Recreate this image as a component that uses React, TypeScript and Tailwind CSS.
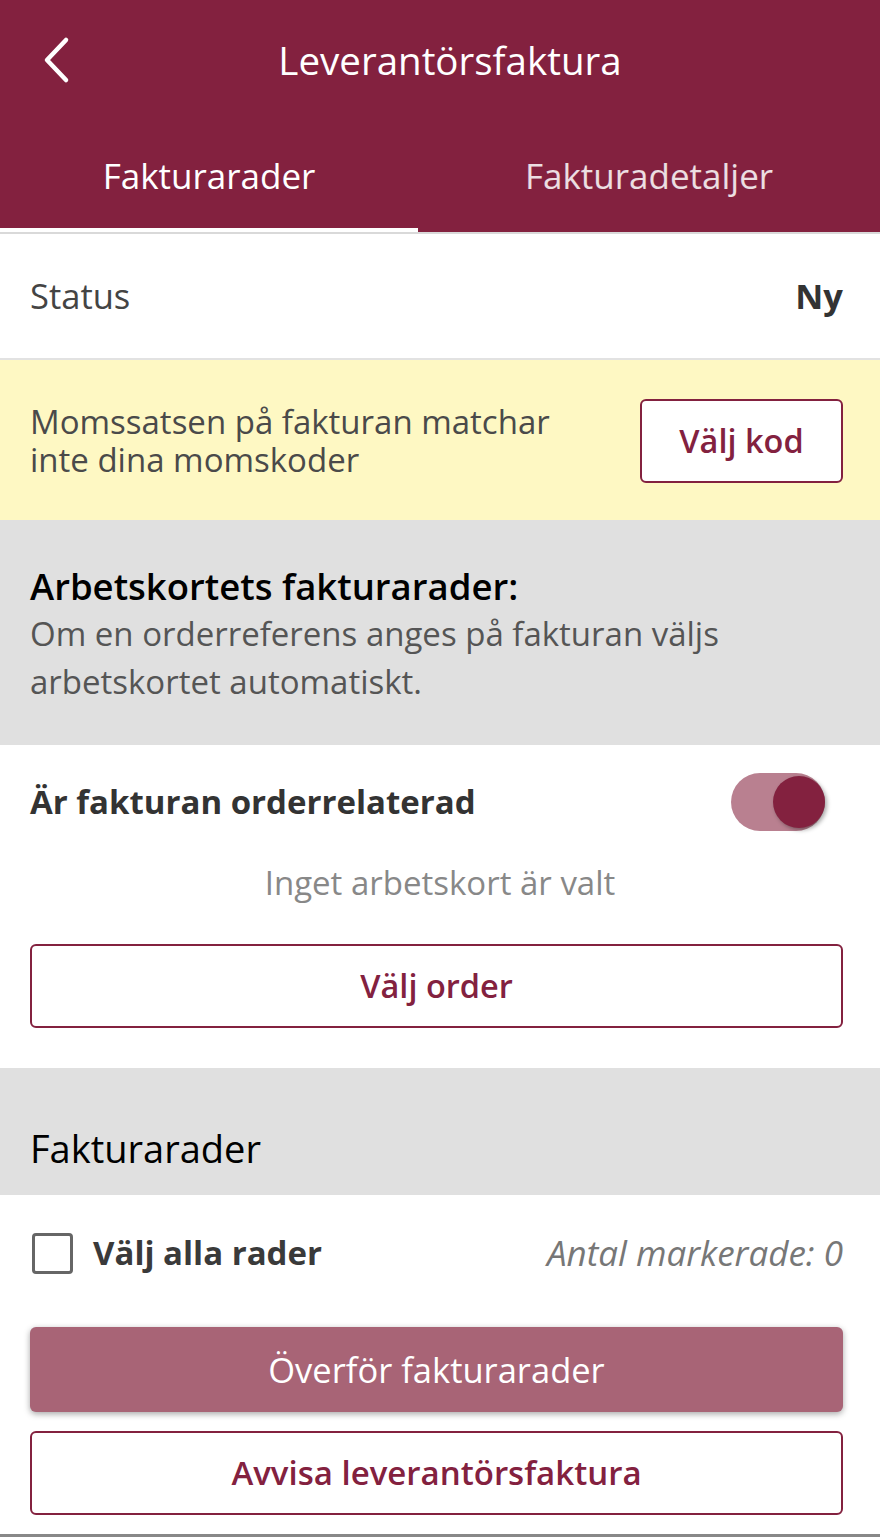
import React from "react";

export default function App() {
  return (
    <div className="w-[880px] h-[1537px] bg-white overflow-hidden flex flex-col" style={{ fontFamily: '"Open Sans", sans-serif' }}>
      {/* Header */}
      <div className="bg-[#83213f] text-white">
        <div className="h-[118px] flex items-center relative">
          <button className="absolute left-[38px] top-[34px] w-[36px] h-[52px] flex items-center justify-center">
            <svg width="30" height="48" viewBox="0 0 30 48" fill="none">
              <path d="M25 4 L6 24 L25 44" stroke="white" strokeWidth="4.5" strokeLinecap="round" strokeLinejoin="round" />
            </svg>
          </button>
          <div className="w-full text-center pl-[20px] text-[38.5px] leading-none pt-[2px]">Leverantörsfaktura</div>
        </div>
        <div className="h-[114px] flex">
          <div className="w-[418px] flex flex-col">
            <div className="flex-1 flex items-center justify-center text-[35px] pt-[6px]">Fakturarader</div>
            <div className="h-[4px] bg-white" />
          </div>
          <div className="flex-1 flex items-center justify-center text-[35px] text-white/85 pt-[2px]">Fakturadetaljer</div>
        </div>
      </div>
      <div className="h-[2px] bg-[#d9d9d9]" />

      {/* Status */}
      <div className="h-[126px] flex items-center justify-between pl-[30px] pr-[37px] border-b-2 border-[#e2e2e2]">
        <span className="text-[34.5px] text-[#444]">Status</span>
        <span className="text-[34.5px] font-bold text-[#333]">Ny</span>
      </div>

      {/* Warning */}
      <div className="h-[160px] bg-[#fef8c3] flex items-center justify-between pl-[30px] pr-[37px]">
        <p className="text-[33px] leading-[38px] text-[#4a4a4a] pt-[2px]">
          Momssatsen på fakturan matchar
          <br />
          inte dina momskoder
        </p>
        <button className="w-[203px] h-[84px] border-2 border-[#83213f] rounded-[6px] bg-white text-[#83213f] text-[32.5px] font-semibold mt-[2px]">
          Välj kod
        </button>
      </div>

      {/* Arbetskort info */}
      <div className="h-[225px] bg-[#e0e0e0] px-[30px] pt-[40px]">
        <div className="text-[36.5px] font-semibold text-black leading-[52px]">Arbetskortets fakturarader:</div>
        <div className="text-[33px] text-[#555] leading-[48px] -mt-[2px]">
          Om en orderreferens anges på fakturan väljs
          <br />
          arbetskortet automatiskt.
        </div>
      </div>

      {/* Order related */}
      <div className="h-[323px] pl-[30px] pr-[37px] flex flex-col">
        <div className="h-[114px] flex items-center justify-between">
          <span className="text-[33px] font-bold text-[#333]">Är fakturan orderrelaterad</span>
          <div className="relative w-[94px] h-[58px] mr-[18px]">
            <div className="absolute inset-0 rounded-full bg-[#b98090]" />
            <div className="absolute right-0 top-[3px] w-[52px] h-[52px] rounded-full bg-[#83213f] shadow-[2px_2px_4px_rgba(0,0,0,0.35)]" />
          </div>
        </div>
        <div className="text-center text-[33px] text-[#888] leading-[40px] mt-[4px] pl-[7px]">Inget arbetskort är valt</div>
        <button className="mt-[41px] w-full h-[84px] border-2 border-[#83213f] rounded-[6px] text-[#83213f] text-[32.5px] font-semibold">
          Välj order
        </button>
      </div>

      {/* Fakturarader header */}
      <div className="h-[127px] bg-[#e0e0e0] px-[30px] flex items-end pb-[18px]">
        <span className="text-[38px] text-black font-medium">Fakturarader</span>
      </div>

      {/* Select all */}
      <div className="h-[116px] pl-[30px] pr-[37px] flex items-center justify-between">
        <div className="flex items-center gap-[20px]">
          <div className="w-[41px] h-[41px] border-[3px] border-[#666] rounded-[4px] ml-[2px]" />
          <span className="text-[33px] font-bold text-[#3a3a3a]">Välj alla rader</span>
        </div>
        <span className="text-[35px] italic text-[#777]">Antal markerade: 0</span>
      </div>

      <div className="pl-[30px] pr-[37px] pt-[16px] flex flex-col gap-[19px]">
        <button className="w-full h-[85px] rounded-[6px] bg-[#a86476] text-white text-[34.5px] shadow-[0_2px_6px_rgba(0,0,0,0.35)]">
          Överför fakturarader
        </button>
        <button className="w-full h-[84px] border-2 border-[#83213f] rounded-[6px] text-[#83213f] text-[33px] font-semibold">
          Avvisa leverantörsfaktura
        </button>
      </div>
      <div className="flex-1" />
      <div className="h-[3px] bg-[#888]" />
    </div>
  );
}
